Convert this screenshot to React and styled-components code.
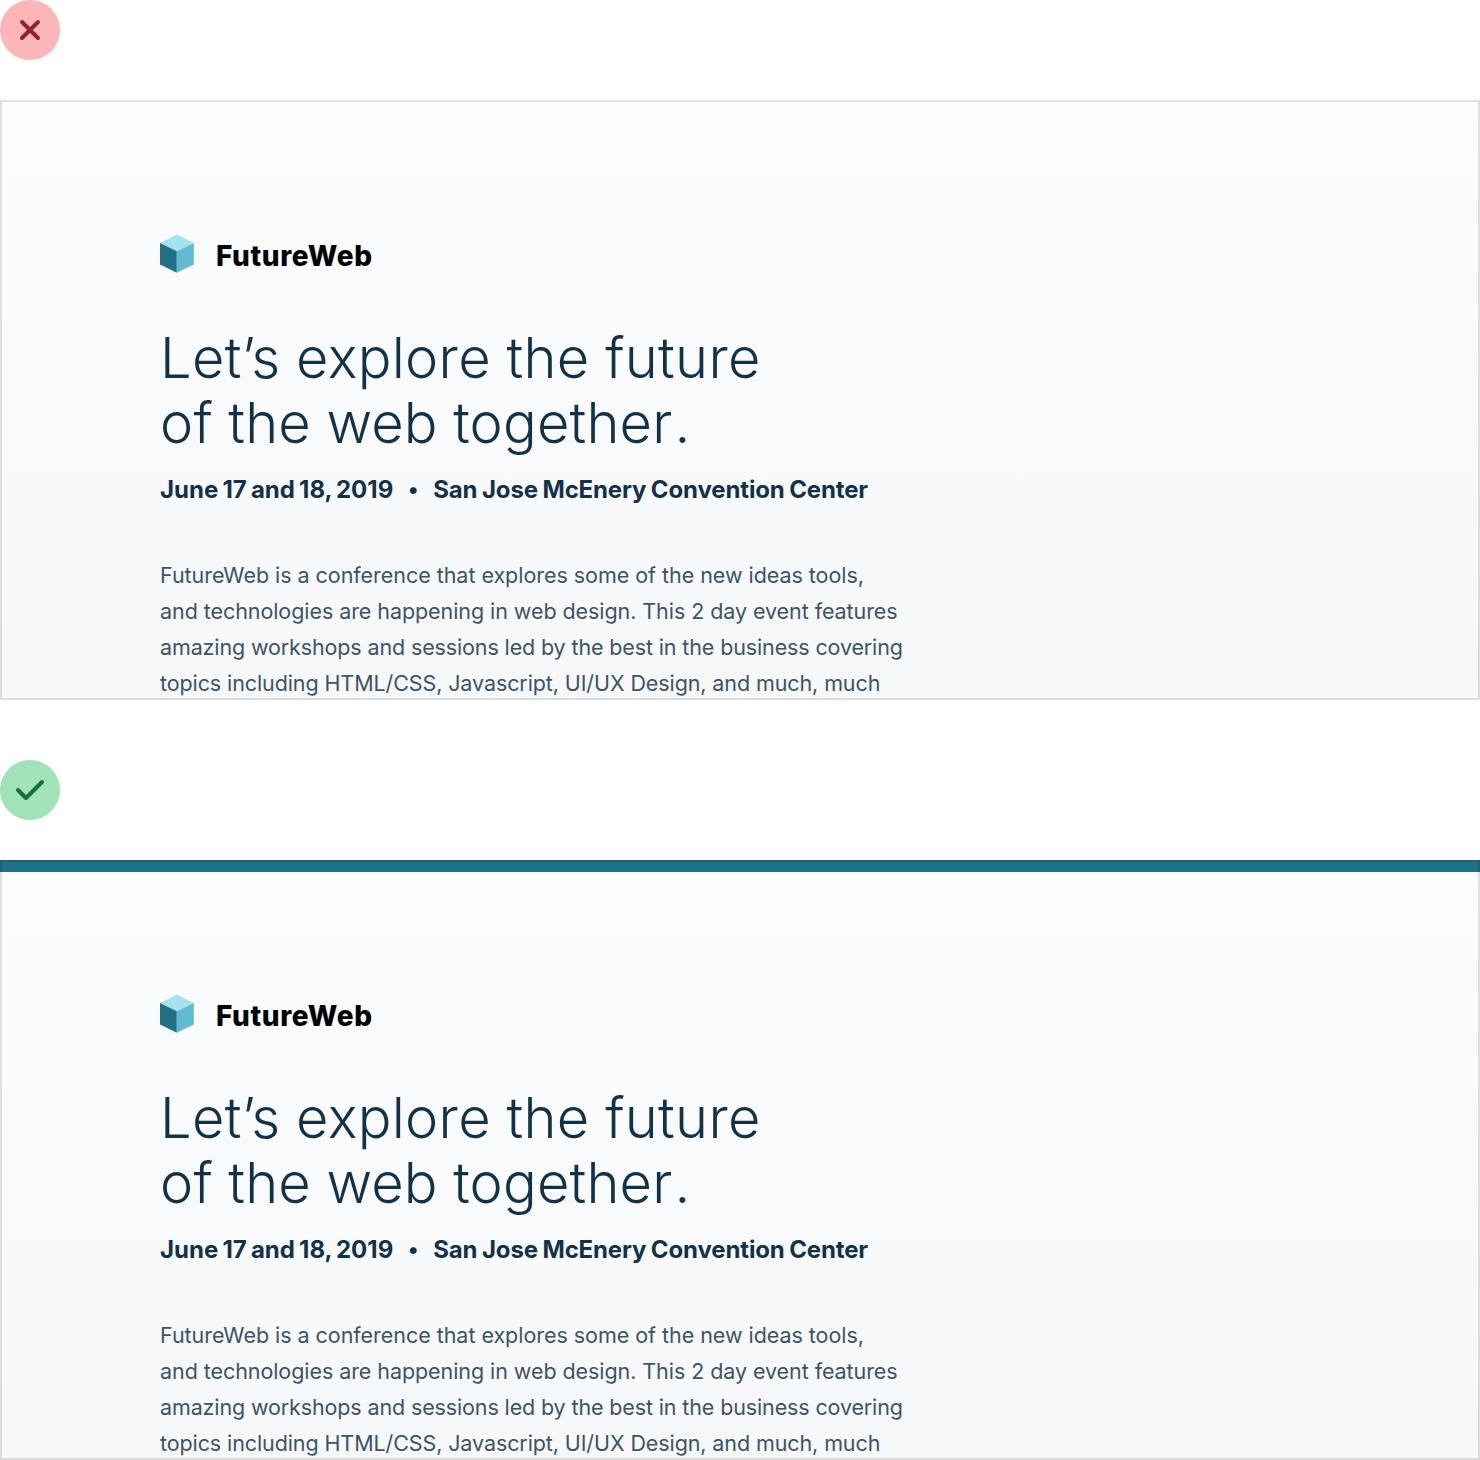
import React from "react";
import styled, { createGlobalStyle } from "styled-components";

const GlobalStyle = createGlobalStyle`
  * { box-sizing: border-box; }
  body { margin: 0; background: #fff; font-family: Inter, "Liberation Sans", sans-serif; }
`;

const Page = styled.main`
  width: 1480px;
  display: flex;
  flex-direction: column;
  gap: 60px;
`;
const Example = styled.section`
  display: flex;
  flex-direction: column;
  gap: 40px;
`;
const Badge = styled.svg`
  display: block;
  width: 60px;
  height: 60px;
`;
const Panel = styled.article`
  position: relative;
  height: 600px;
  overflow: hidden;
  background: linear-gradient(#fbfcfe, #f6f8fa);
  &::after {
    content: "";
    position: absolute;
    inset: 0;
    border: 2px solid rgba(0, 0, 0, 0.11);
  }
`;
const AccentBar = styled.div`
  height: 12px;
  background: ${(p) => (p.$visible ? "#207086" : "transparent")};
`;
const Content = styled.div`
  padding: 122px 160px 0;
`;
const Brand = styled.div`
  display: flex;
  gap: 22px;
  height: 40px;
`;
const Cube = styled.svg`
  width: 34px;
  height: 40px;
`;
const Line = styled.span`
  display: block;
  width: max-content;
  white-space: pre;
  letter-spacing: ${(p) => p.$track || 0}px;
  word-spacing: ${(p) => p.$word || 0}px;
`;
const Name = styled.div`
  font-size: 28px;
  font-weight: 800;
  line-height: 44px;
  letter-spacing: 0.62px;
  color: #000;
`;
const Title = styled.h1`
  margin: 52px 0 0;
  font-size: 56px;
  font-weight: 300;
  line-height: 65px;
  color: #12324a;
`;
const Stop = styled.span`
  margin-left: 2px;
`;
const Meta = styled.div`
  display: flex;
  margin-top: 19px;
  font-size: 24px;
  font-weight: 700;
  line-height: 30px;
  color: #12324a;
`;
const Dot = styled.span`
  width: 40px;
  font-size: 22px;
  line-height: 29px;
  text-align: center;
`;
const Body = styled.p`
  margin: 52px 0 0;
  font-size: 21.5px;
  font-weight: 400;
  line-height: 36px;
  color: #3d5467;
`;

function Hero({ accent }) {
  return (
    <Panel>
      <AccentBar $visible={accent} />
      <Content>
        <Brand>
          <Cube viewBox="0 0 34 40">
            <path d="M16.8 .5 33.8 9 16.8 17.2 0 9Z" fill="#a5e1ef" />
            <path d="M0 9 16.8 17.2V38.8L0 30.5Z" fill="#207086" />
            <path d="M33.8 9 16.8 17.2V38.8l17-8.3Z" fill="#62bbd2" />
          </Cube>
          <Name>FutureWeb</Name>
        </Brand>
        <Title>
          <Line $track={0.32} $word={-0.5}>Let’s explore the future</Line>
          <Line $track={0.18} $word={-0.5}>of the web together<Stop>.</Stop></Line>
        </Title>
        <Meta>
          <Line $track={0} $word={-1.5}>June 17 and 18, 2019</Line>
          <Dot>•</Dot>
          <Line $track={-0.14} $word={-1}>San Jose McEnery Convention Center</Line>
        </Meta>
        <Body>
          <Line $track={-0.04}>FutureWeb is a conference that explores some of the new ideas tools,</Line>
          <Line $track={-0.07}>and technologies are happening in web design. This 2 day event features</Line>
          <Line $track={-0.13}>amazing workshops and sessions led by the best in the business covering</Line>
          <Line $track={-0.1}>topics including HTML/CSS, Javascript, UI/UX Design, and much, much</Line>
        </Body>
      </Content>
    </Panel>
  );
}

export default function App() {
  return (
    <>
      <GlobalStyle />
      <Page>
        <Example>
          <Badge viewBox="0 0 60 60">
            <circle cx="30" cy="30" r="30" fill="#fcb6b8" />
            <path d="M22 22 38 38M38 22 22 38" stroke="#8d2629" strokeWidth="4" strokeLinecap="round" fill="none" />
          </Badge>
          <Hero />
        </Example>
        <Example>
          <Badge viewBox="0 0 60 60">
            <circle cx="30" cy="30" r="30" fill="#9fe3b6" />
            <path d="M18 30 26 38 42 22" stroke="#15703c" strokeWidth="4" strokeLinecap="round" strokeLinejoin="round" fill="none" />
          </Badge>
          <Hero accent />
        </Example>
      </Page>
    </>
  );
}
